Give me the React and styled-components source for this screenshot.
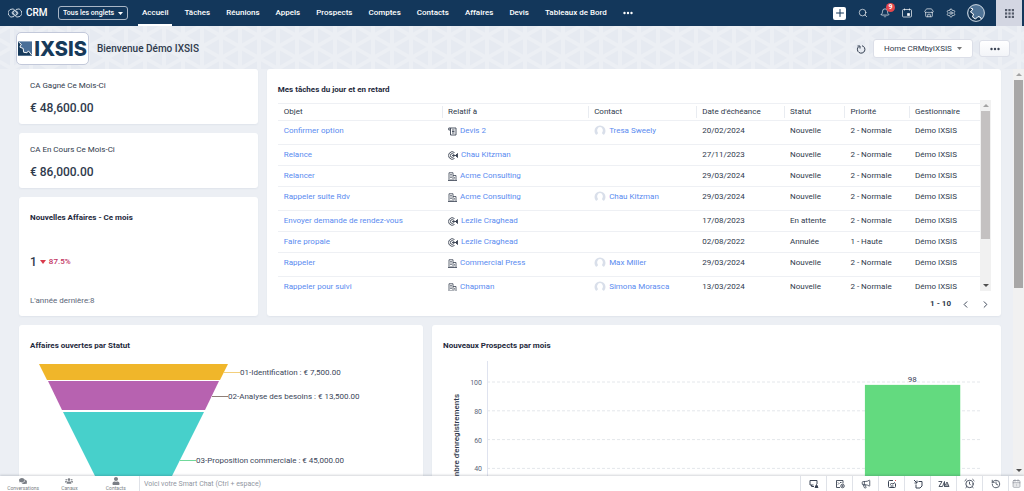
import React from "react";
import styled, { createGlobalStyle } from "styled-components";
import {
  AlarmClock,
  Bell,
  CalendarDays,
  ChevronLeft,
  ChevronRight,
  History,
  Megaphone,
  Plus,
  Search,
  Settings,
  Store,
} from "lucide-react";
import { FaComments, FaUser, FaUsers } from "react-icons/fa";

const GlobalStyle = createGlobalStyle`
  * {
    box-sizing: border-box;
  }
  body {
    margin: 0;
    background: #eceff4;
    color: #2f3a4c;
    font-family: Roboto, "Liberation Sans", sans-serif;
    font-size: 8px;
    line-height: 10px;
  }
  button, select, input {
    font: inherit;
    color: inherit;
  }
  a {
    text-decoration: none;
  }
`;

const pattern = `url("data:image/svg+xml,%3Csvg xmlns='http://www.w3.org/2000/svg' width='38' height='22'%3E%3Cpath fill='%23e6eaf1' d='M0 0h38v22H0z'/%3E%3Cpath stroke='%23eceff4' stroke-width='4' d='M0-2v26M38-2v26M19-2v26M-4-2l46 26M-4 24L42-2'/%3E%3C/svg%3E")`;

const Page = styled.div`
  display: flex;
  flex-direction: column;
  height: 100vh;
  overflow: hidden;
`;

const TopBar = styled.header`
  display: flex;
  align-items: center;
  flex: 0 0 26px;
  padding: 0 2px 0 8px;
  background: #13375b;
  color: #fff;
`;

const Brand = styled.a`
  display: flex;
  align-items: center;
  gap: 4px;
  width: 50px;
  color: #fff;
  font-size: 10px;
  font-weight: 500;
`;

const TabSelect = styled.select`
  appearance: none;
  width: 70px;
  height: 14px;
  padding: 0 10px 0 4px;
  border: 1px solid #a9b6c6;
  border-radius: 3px;
  background: no-repeat right 4px center / 5px 3px
    url("data:image/svg+xml,%3Csvg xmlns='http://www.w3.org/2000/svg' viewBox='0 0 10 6'%3E%3Cpath d='M0 0h10L5 6z' fill='white'/%3E%3C/svg%3E");
  color: #fff;
  font-size: 7px;
  font-weight: 500;
`;

const Nav = styled.nav`
  display: flex;
  align-self: stretch;
  gap: 8px;
  margin-left: 10px;
`;

const NavLink = styled.a`
  display: flex;
  align-items: center;
  padding: 2px 4px 0;
  border-bottom: 2px solid ${(props) => (props.$active ? "#fff" : "transparent")};
  color: #fff;
  font-weight: 500;
  white-space: nowrap;
`;

const Tools = styled.div`
  display: flex;
  align-items: center;
  align-self: stretch;
  gap: 11px;
  margin-left: auto;
`;

const IconButton = styled.button`
  position: relative;
  display: flex;
  align-items: center;
  justify-content: center;
  width: ${(props) => props.$size || 11}px;
  height: ${(props) => props.$size || 11}px;
  padding: 0;
  border: 0;
  border-radius: 2px;
  background: ${(props) => (props.$light ? "#fff" : "none")};
  color: ${(props) => props.$color || "inherit"};
`;

const Badge = styled.span`
  position: absolute;
  top: -5px;
  right: -5px;
  width: 9px;
  height: 9px;
  border-radius: 50%;
  background: #e5484d;
  color: #fff;
  font-size: 7px;
  font-weight: 700;
  line-height: 9px;
  text-align: center;
`;

const AppsButton = styled.button`
  display: flex;
  align-items: center;
  justify-content: center;
  align-self: stretch;
  width: 26px;
  padding: 0;
  border: 0;
  background: #d3d6e2;
`;

const Body = styled.div`
  display: flex;
  flex: 1;
  min-height: 0;
  flex-direction: column;
`;

const Banner = styled.div`
  display: flex;
  align-items: center;
  flex: 0 0 43px;
  padding: 2px 14px 0 16px;
  background: ${pattern} 12px 21px / 38px 22px;
`;

const LogoCard = styled.div`
  display: flex;
  align-items: center;
  gap: 2px;
  width: 73px;
  height: 33px;
  padding: 0 1px;
  border: 1px solid #c3c9da;
  border-radius: 5px;
  background: #fff;
  color: #173a5a;
  font-family: Inter, sans-serif;
  font-size: 20px;
  font-weight: 800;
`;

const Welcome = styled.h1`
  flex: 1;
  margin: 0 0 0 8px;
  font-size: 10px;
  font-weight: 500;
`;

const ViewSelect = styled.select`
  appearance: none;
  width: 100px;
  height: 19px;
  margin: 0 6px 0 7px;
  padding: 0 10px;
  border: 1px solid #dcdfe8;
  border-radius: 3px;
  background: #fff no-repeat right 10px center / 5px 3px
    url("data:image/svg+xml,%3Csvg xmlns='http://www.w3.org/2000/svg' viewBox='0 0 10 6'%3E%3Cpath d='M0 0h10L5 6z' fill='%23777'/%3E%3C/svg%3E");
`;

const MoreButton = styled.button`
  display: flex;
  align-items: center;
  justify-content: center;
  width: 31px;
  height: 17px;
  border: 1px solid #dcdfe8;
  border-radius: 3px;
  background: linear-gradient(#fff, #f2f4f8);
`;

const Scroller = styled.div`
  display: flex;
  flex: 1;
  min-height: 0;
`;

const Dashboard = styled.main`
  display: flex;
  flex: 1;
  flex-direction: column;
  gap: 9px;
  min-width: 0;
  padding: 0 12px 0 19px;
  overflow: hidden;
`;

const Row = styled.div`
  display: grid;
  flex: none;
  grid-template-columns: ${(props) => props.$columns};
  gap: 9px;
`;

const Stack = styled.div`
  display: flex;
  flex-direction: column;
  gap: 9px;
`;

const Card = styled.section`
  display: flex;
  flex-direction: column;
  min-width: 0;
  padding: 0 10px 0 11px;
  border-radius: 3px;
  background: #fff;
  box-shadow: 0 1px 2px rgba(40, 60, 100, 0.06);
`;

const KpiCard = styled(Card)`
  gap: 11px;
  padding-top: 12px;
  padding-bottom: 10px;
`;

const KpiLabel = styled.div`
  line-height: 10px;
`;

const KpiValue = styled.div`
  color: #2f3a4c;
  font-size: 12px;
  font-weight: 500;
  line-height: 12px;
`;

const CompareCard = styled(Card)`
  flex: 1;
  justify-content: space-between;
  padding-top: 16px;
  padding-bottom: 10px;
`;

const CardTitle = styled.h2`
  margin: 0;
  color: #1e293c;
  font-size: 8px;
  font-weight: 700;
  line-height: 10px;
`;

const Trend = styled.div`
  display: flex;
  align-items: center;
  gap: 3px;
  padding-top: 4px;
  color: #c2335f;
  font-weight: 500;
`;

const Muted = styled.div`
  color: #5b6679;
`;

const TasksCard = styled(Card)`
  height: 247px;
  padding-top: 16px;
`;

const TableArea = styled.div`
  display: flex;
  height: 191px;
  margin-top: 5px;
`;

const TableClip = styled.div`
  flex: 1;
  min-width: 0;
  padding-top: 3px;
  overflow: hidden;
`;

const Table = styled.table`
  width: 100%;
  border-spacing: 0;
  table-layout: fixed;
`;

const HeadCell = styled.th`
  width: ${(props) => props.$width};
  height: 18px;
  padding: 0 6px;
  border-top: 1px solid #eef0f4;
  border-bottom: 1px solid #eef0f4;
  background: ${(props) =>
    props.$first ? "none" : "linear-gradient(#e9ecf1, #e9ecf1) no-repeat left center / 1px 12px"};
  font-weight: 400;
  text-align: left;
`;

const Cell = styled.td`
  height: ${(props) => (props.$tall ? 24 : 21)}px;
  padding: 5px 0 0 6px;
  border-bottom: ${(props) => (props.$last ? "0" : "1px solid #eef0f4")};
  vertical-align: top;
  white-space: nowrap;
`;

const CellLink = styled.a`
  display: flex;
  align-items: center;
  gap: 3px;
  height: 10px;
  color: #5a8bf0;

  svg {
    flex: none;
    color: #3b4454;
  }
`;

const Track = styled.div`
  display: flex;
  flex: 0 0 11px;
  flex-direction: column;
  align-items: stretch;
  background: #f1f1f1;
`;

const Arrow = styled.span`
  align-self: center;
  width: 0;
  margin: 4px 0;
  border: 3px solid transparent;
  border-top: ${(props) => (props.$down ? "3px solid #505050" : "0")};
  border-bottom: ${(props) => (props.$down ? "0" : "3px solid #a3a3a3")};
`;

const Thumb = styled.span`
  height: ${(props) => props.$height};
  margin: 0 1px auto;
  background: ${(props) => props.$color};
`;

const Pager = styled.div`
  display: flex;
  flex: 1;
  align-items: center;
  justify-content: flex-end;
  gap: 9px;
  padding-top: 1px;
  font-weight: 700;
`;

const ChartCard = styled(Card)`
  height: 240px;
  padding-top: 16px;
`;

const FunnelSvg = styled.svg`
  flex: none;
  width: 100%;
  height: 180px;
  margin-top: 13px;
  font-size: 8px;
  fill: #3b4659;
`;

const Plot = styled.div`
  display: flex;
  height: 180px;
  margin-top: 10px;
  padding-right: 10px;
`;

const AxisSvg = styled.svg`
  flex: 0 0 44px;
  height: 180px;
  font-size: 7px;
  fill: #5b6679;
`;

const AxisTitle = styled.text`
  font-size: 8px;
  font-weight: 500;
  fill: #2f3a4c;
`;

const BarsSvg = styled.svg`
  flex: 1;
  min-width: 0;
  height: 180px;
  font-size: 8px;
  fill: #3b4659;
`;

const ChatBar = styled.footer`
  display: flex;
  flex: 0 0 15px;
  background: #fff;
  box-shadow: 0 -1px 2px rgba(40, 50, 70, 0.2);
  z-index: 1;
`;

const ChatTabs = styled.div`
  display: flex;
  width: 140px;
  border-right: 1px solid #dfe2e8;
`;

const ChatTab = styled.button`
  display: flex;
  flex: 1 1 0;
  flex-direction: column;
  align-items: center;
  justify-content: center;
  min-width: 0;
  padding: 0;
  border: 0;
  background: none;
  color: #7b7f86;
  font-size: 5px;
  line-height: 6px;
`;

const ChatInput = styled.input`
  flex: 1;
  min-width: 0;
  padding: 0 4px;
  border: 0;
  background: none;
  font-size: 7px;

  &::placeholder {
    color: #9096a1;
    opacity: 1;
  }
`;

const ChatTool = styled.button`
  display: flex;
  align-items: center;
  justify-content: center;
  width: ${(props) => (props.$narrow ? 16 : 26)}px;
  padding: 0;
  border: 0;
  border-left: 1px solid #dfe2e8;
  background: none;
  color: ${(props) => (props.$narrow ? "#8d929b" : "#3b4454")};
`;

const tabs = [
  "Accueil",
  "Tâches",
  "Réunions",
  "Appels",
  "Prospects",
  "Comptes",
  "Contacts",
  "Affaires",
  "Devis",
  "Tableaux de Bord",
];

const columns = [
  ["Objet", "23.4%"],
  ["Relatif à", "20.8%"],
  ["Contact", "15.4%"],
  ["Date d'échéance", "12.5%"],
  ["Statut", "8.6%"],
  ["Priorité", "9.2%"],
  ["Gestionnaire", "10.1%"],
];

const tasks = [
  ["Confirmer option", "quote", "Devis 2", "Tresa Sweely", "20/02/2024", "Nouvelle", "2 - Normale"],
  ["Relance", "lead", "Chau Kitzman", "", "27/11/2023", "Nouvelle", "2 - Normale"],
  ["Relancer", "account", "Acme Consulting", "", "29/03/2024", "Nouvelle", "2 - Normale"],
  ["Rappeler suite Rdv", "account", "Acme Consulting", "Chau Kitzman", "29/03/2024", "Nouvelle", "2 - Normale"],
  ["Envoyer demande de rendez-vous", "lead", "Lezlie Craghead", "", "17/08/2023", "En attente", "2 - Normale"],
  ["Faire propale", "lead", "Lezlie Craghead", "", "02/08/2022", "Annulée", "1 - Haute"],
  ["Rappeler", "account", "Commercial Press", "Max Miller", "29/03/2024", "Nouvelle", "2 - Normale"],
  ["Rappeler pour suivi", "account", "Chapman", "Simona Morasca", "13/03/2024", "Nouvelle", "2 - Normale"],
];

const ticks = [100, 80, 60, 40];

const tickY = (value) => 165 - value * 1.44;

function Dots({ color }) {
  return (
    <svg width="10" height="4" viewBox="0 0 10 4" fill={color}>
      <circle cx="1.5" cy="2" r="1.2" />
      <circle cx="5" cy="2" r="1.2" />
      <circle cx="8.5" cy="2" r="1.2" />
    </svg>
  );
}

function LogoMark() {
  return (
    <svg width="15" height="15" viewBox="0 0 30 30">
      <path d="M0 0h30v30H0z" fill="#4a6f98" />
      <path d="M0 0l7 5-3 7 7 3 1 8 7 1 3-4 8 10H0z" fill="#173a5a" />
      <path d="M1 1l6 5-3 6 7 3 1 8 7 1 3-4 7 9" fill="none" stroke="#fff" strokeWidth="2" />
    </svg>
  );
}

function Avatar() {
  return (
    <svg width="18" height="18" viewBox="0 0 36 36">
      <circle cx="18" cy="18" r="17" fill="#4f7396" />
      <path d="M6 7a17 17 0 0 0 22 25l-3-6-5 2-4 3-5-5 1-6-6-4 5-6z" fill="#12314f" />
      <path d="M7 8l5 2-5 6 6 4-2 6 6 4 5-5 4 1 3 4" fill="none" stroke="#fff" strokeWidth="2" />
      <circle cx="18" cy="18" r="16.8" fill="none" stroke="#dfe5ec" strokeWidth="1.8" />
    </svg>
  );
}

function Face() {
  return (
    <svg width="12" height="12" viewBox="0 0 24 24">
      <circle cx="12" cy="12" r="11" fill="#d9dfea" />
      <path d="M12 4a6 7 0 0 1 4 12l1 2c3 1 4 3 4 6H3c0-3 1-5 4-6l1-2a6 7 0 0 1 4-12z" fill="#fff" />
    </svg>
  );
}

function RecordIcon({ kind }) {
  if (kind === "account") {
    return (
      <svg width="9" height="9" viewBox="0 0 18 18" fill="none" stroke="currentColor" strokeWidth="1.6">
        <path d="M0 17h18M2 17V1.500h8V17M10 7h6v10" />
        <path d="M4.500 5h3M4.500 8h3M4.500 11h3M6 17v-3M13 10v1.500M13 13v1.500" />
      </svg>
    );
  }
  if (kind === "lead") {
    return (
      <svg width="10" height="9" viewBox="0 0 20 18" fill="none" stroke="currentColor" strokeWidth="1.8">
        <path d="M13 15a7.500 7.500 0 1 1 0-12" />
        <circle cx="8.5" cy="9" r="3.8" />
        <path d="M8 9h8M15 9l4-4v8z" fill="currentColor" />
      </svg>
    );
  }
  return (
    <svg width="9" height="9" viewBox="0 0 18 18" fill="none" stroke="currentColor" strokeWidth="1.8">
      <path d="M5 6v10h11V2H1.500v4H5V2M8 6h5M8 9h5M8 12h5" />
    </svg>
  );
}

function Header() {
  return (
    <TopBar>
      <Brand href="#crm">
        <svg width="14" height="10" viewBox="0 0 28 20" fill="none" stroke="#dfe6ee" strokeWidth="1.8">
          <path d="M12 17a8 8 0 1 1 3-11l3 5a4 4 0 0 1-7 3l-3-4a3 3 0 0 1 5-2" />
          <path d="M16 3a8 8 0 1 1-3 11l-3-5a4 4 0 0 1 7-3l3 4a3 3 0 0 1-5 2" />
        </svg>
        CRM
      </Brand>
      <TabSelect aria-label="Onglets">
        <option>Tous les onglets</option>
      </TabSelect>
      <Nav>
        {tabs.map((tab, i) => (
          <NavLink key={tab} href="#tab" $active={i === 0}>
            {tab}
          </NavLink>
        ))}
        <NavLink href="#more" aria-label="Plus">
          <Dots color="#fff" />
        </NavLink>
      </Nav>
      <Tools>
        <IconButton $size={13} $light $color="#13375b" aria-label="Créer">
          <Plus size={12} />
        </IconButton>
        <IconButton aria-label="Rechercher">
          <Search size={10} strokeWidth={1.6} />
        </IconButton>
        <IconButton aria-label="Notifications">
          <Bell size={10} strokeWidth={1.6} />
          <Badge>9</Badge>
        </IconButton>
        <IconButton aria-label="Calendrier">
          <svg width="10" height="10" viewBox="0 0 20 20" fill="none" stroke="currentColor" strokeWidth="1.4">
            <rect x="1" y="3" width="18" height="15" rx="2" />
            <path d="M5 1v4M15 1v4" />
            <path d="M11 11h4v4h-4z" fill="currentColor" />
          </svg>
        </IconButton>
        <IconButton aria-label="Marketplace">
          <Store size={10} strokeWidth={1.6} />
        </IconButton>
        <IconButton aria-label="Paramètres">
          <Settings size={10} strokeWidth={1.6} />
        </IconButton>
        <IconButton $size={18} aria-label="Profil">
          <Avatar />
        </IconButton>
        <AppsButton aria-label="Applications">
          <svg width="9" height="9" viewBox="0 0 9 9" fill="#555c6b">
            {[0, 3.4, 6.8].map((y) =>
              [0, 3.4, 6.8].map((x) => <rect key={`${x}-${y}`} x={x} y={y} width="2.2" height="2.2" />)
            )}
          </svg>
        </AppsButton>
      </Tools>
    </TopBar>
  );
}

function TaskTable() {
  return (
    <Table>
      <thead>
        <tr>
          {columns.map(([label, width], i) => (
            <HeadCell key={label} $width={width} $first={i === 0}>
              {label}
            </HeadCell>
          ))}
        </tr>
      </thead>
      <tbody>
        {tasks.map(([subject, kind, related, contact, due, status, priority], i) => {
          const last = i === tasks.length - 1;
          return (
            <tr key={subject}>
              <Cell $tall={contact !== ""} $last={last}>
                <CellLink href="#task">{subject}</CellLink>
              </Cell>
              <Cell $last={last}>
                <CellLink href="#related">
                  <RecordIcon kind={kind} />
                  {related}
                </CellLink>
              </Cell>
              <Cell $last={last}>
                {contact && (
                  <CellLink href="#contact">
                    <Face />
                    {contact}
                  </CellLink>
                )}
              </Cell>
              <Cell $last={last}>{due}</Cell>
              <Cell $last={last}>{status}</Cell>
              <Cell $last={last}>{priority}</Cell>
              <Cell $last={last}>Démo IXSIS</Cell>
            </tr>
          );
        })}
      </tbody>
    </Table>
  );
}

function Funnel() {
  return (
    <FunnelSvg>
      <path d="M9 0h189l-8 16H17z" fill="#f0b62a" />
      <path d="M18 17h171l-14 29H32z" fill="#b762b0" />
      <path d="M33 48h141l-39 78H72z" fill="#47d0cb" />
      <path d="M194 8.500h16" stroke="#f3cf7c" />
      <path d="M182 32.500h16" stroke="#8f8078" />
      <path d="M150 96.500h16" stroke="#71d99b" />
      <text x="210" y="11">01-Identification : € 7,500.00</text>
      <text x="198" y="35">02-Analyse des besoins : € 13,500.00</text>
      <text x="166" y="99">03-Proposition commerciale : € 45,000.00</text>
    </FunnelSvg>
  );
}

function ProspectChart() {
  return (
    <Plot>
      <AxisSvg>
        {ticks.map((value) => (
          <text key={value} x="39" y={tickY(value) + 3} textAnchor="end">
            {value}
          </text>
        ))}
        <AxisTitle transform="translate(16 33) rotate(-90)" textAnchor="end">
          Nombre d'enregistrements
        </AxisTitle>
      </AxisSvg>
      <BarsSvg>
        {ticks.map((value) => (
          <line
            key={value}
            x1="0"
            x2="100%"
            y1={tickY(value)}
            y2={tickY(value)}
            stroke="#e4e7eb"
            strokeDasharray="3 2"
          />
        ))}
        <line x1="0.5" x2="0.5" y1="0" y2="165" stroke="#dfe3ef" />
        <rect x="76.5%" y={tickY(98)} width="19.3%" height={165 - tickY(98)} fill="#63da7f" />
        <text x="86.1%" y={tickY(98) - 3} textAnchor="middle">
          98
        </text>
      </BarsSvg>
    </Plot>
  );
}

function ChatFooter() {
  return (
    <ChatBar>
      <ChatTabs>
        <ChatTab>
          <FaComments size={8} />
          Conversations
        </ChatTab>
        <ChatTab>
          <FaUsers size={8} />
          Canaux
        </ChatTab>
        <ChatTab>
          <FaUser size={8} />
          Contacts
        </ChatTab>
      </ChatTabs>
      <ChatInput aria-label="Smart Chat" placeholder="Voici votre Smart Chat (Ctrl + espace)" />
      <ChatTool aria-label="Partage">
        <svg width="10" height="10" viewBox="0 0 20 20" fill="none" stroke="currentColor" strokeWidth="2">
          <path d="M9 12H2V3h14v7M5 12v3h5" />
          <path d="M12 17l3-6 3 6z" fill="currentColor" />
        </svg>
      </ChatTool>
      <ChatTool aria-label="Modèles">
        <svg width="10" height="10" viewBox="0 0 20 20" fill="none" stroke="currentColor" strokeWidth="1.8">
          <path d="M10 17H3V3h13v6M6 7l2 2-2 2M10 7h3" />
          <circle cx="15" cy="14" r="3.5" />
          <circle cx="15" cy="14" r="1" />
        </svg>
      </ChatTool>
      <ChatTool aria-label="Annonces">
        <Megaphone size={10} />
      </ChatTool>
      <ChatTool aria-label="Zia">
        <svg width="10" height="10" viewBox="0 0 20 20" fill="none" stroke="currentColor" strokeWidth="2">
          <path d="M12 3H5a2 2 0 0 0-2 2v10a2 2 0 0 0 2 2h10a2 2 0 0 0 2-2V9M6 11l3-2 3 1 4-3M7 14h6" />
          <path d="M16 3h2" stroke="#e0574f" />
        </svg>
      </ChatTool>
      <ChatTool aria-label="Notes">
        <svg width="10" height="10" viewBox="0 0 20 20" fill="none" stroke="currentColor" strokeWidth="2">
          <path d="M11 5h7v9l-4 4H6v-7M2 2l6 6M8 3v5H3" />
        </svg>
      </ChatTool>
      <ChatTool aria-label="Assistant">
        <svg width="12" height="10" viewBox="0 0 24 20" fill="none" stroke="currentColor" strokeWidth="1.8">
          <path d="M1 5h7L2 15h7l4-10v10M13 15l5-9 4 9zM16 12h4" />
        </svg>
      </ChatTool>
      <ChatTool aria-label="Rappels">
        <AlarmClock size={11} />
      </ChatTool>
      <ChatTool aria-label="Historique">
        <History size={10} />
      </ChatTool>
      <ChatTool $narrow aria-label="Agenda">
        <CalendarDays size={9} />
      </ChatTool>
    </ChatBar>
  );
}

function App() {
  return (
    <Page>
      <GlobalStyle />
      <Header />
      <Body>
        <Banner>
          <LogoCard>
            <LogoMark />
            IXSIS
          </LogoCard>
          <Welcome>Bienvenue Démo IXSIS</Welcome>
          <IconButton aria-label="Actualiser">
            <svg width="10" height="10" viewBox="0 0 20 20" fill="none" stroke="currentColor" strokeWidth="2">
              <path d="M12 3.500a7.500 7.500 0 1 1-7 2M3 4h5v5" />
            </svg>
          </IconButton>
          <ViewSelect aria-label="Vue">
            <option>Home CRMbyIXSIS</option>
          </ViewSelect>
          <MoreButton aria-label="Plus d'options">
            <Dots color="#3b4454" />
          </MoreButton>
        </Banner>
        <Scroller>
          <Dashboard>
            <Row $columns="239fr 735fr">
              <Stack>
                <KpiCard>
                  <KpiLabel>CA Gagné Ce Mois-Ci</KpiLabel>
                  <KpiValue>€ 48,600.00</KpiValue>
                </KpiCard>
                <KpiCard>
                  <KpiLabel>CA En Cours Ce Mois-Ci</KpiLabel>
                  <KpiValue>€ 86,000.00</KpiValue>
                </KpiCard>
                <CompareCard>
                  <CardTitle>Nouvelles Affaires - Ce mois</CardTitle>
                  <Trend>
                    <KpiValue>1</KpiValue>
                    <svg width="6" height="4" viewBox="0 0 6 4" fill="#d93a4c">
                      <path d="M0 0h6L3 4z" />
                    </svg>
                    87.5%
                  </Trend>
                  <Muted>L'année dernière:8</Muted>
                </CompareCard>
              </Stack>
              <TasksCard>
                <CardTitle>Mes tâches du jour et en retard</CardTitle>
                <TableArea>
                  <TableClip>
                    <TaskTable />
                  </TableClip>
                  <Track>
                    <Arrow />
                    <Thumb $height="128px" $color="#c4c1c1" />
                    <Arrow $down />
                  </Track>
                </TableArea>
                <Pager>
                  1 - 10
                  <IconButton aria-label="Page précédente">
                    <ChevronLeft size={13} />
                  </IconButton>
                  <IconButton aria-label="Page suivante">
                    <ChevronRight size={13} />
                  </IconButton>
                </Pager>
              </TasksCard>
            </Row>
            <Row $columns="404fr 569fr">
              <ChartCard>
                <CardTitle>Affaires ouvertes par Statut</CardTitle>
                <Funnel />
              </ChartCard>
              <ChartCard>
                <CardTitle>Nouveaux Prospects par mois</CardTitle>
                <ProspectChart />
              </ChartCard>
            </Row>
          </Dashboard>
          <Track>
            <Arrow />
            <Thumb $height="51%" $color="#a8a7a7" />
            <Arrow $down />
          </Track>
        </Scroller>
      </Body>
      <ChatFooter />
    </Page>
  );
}

export default App;
